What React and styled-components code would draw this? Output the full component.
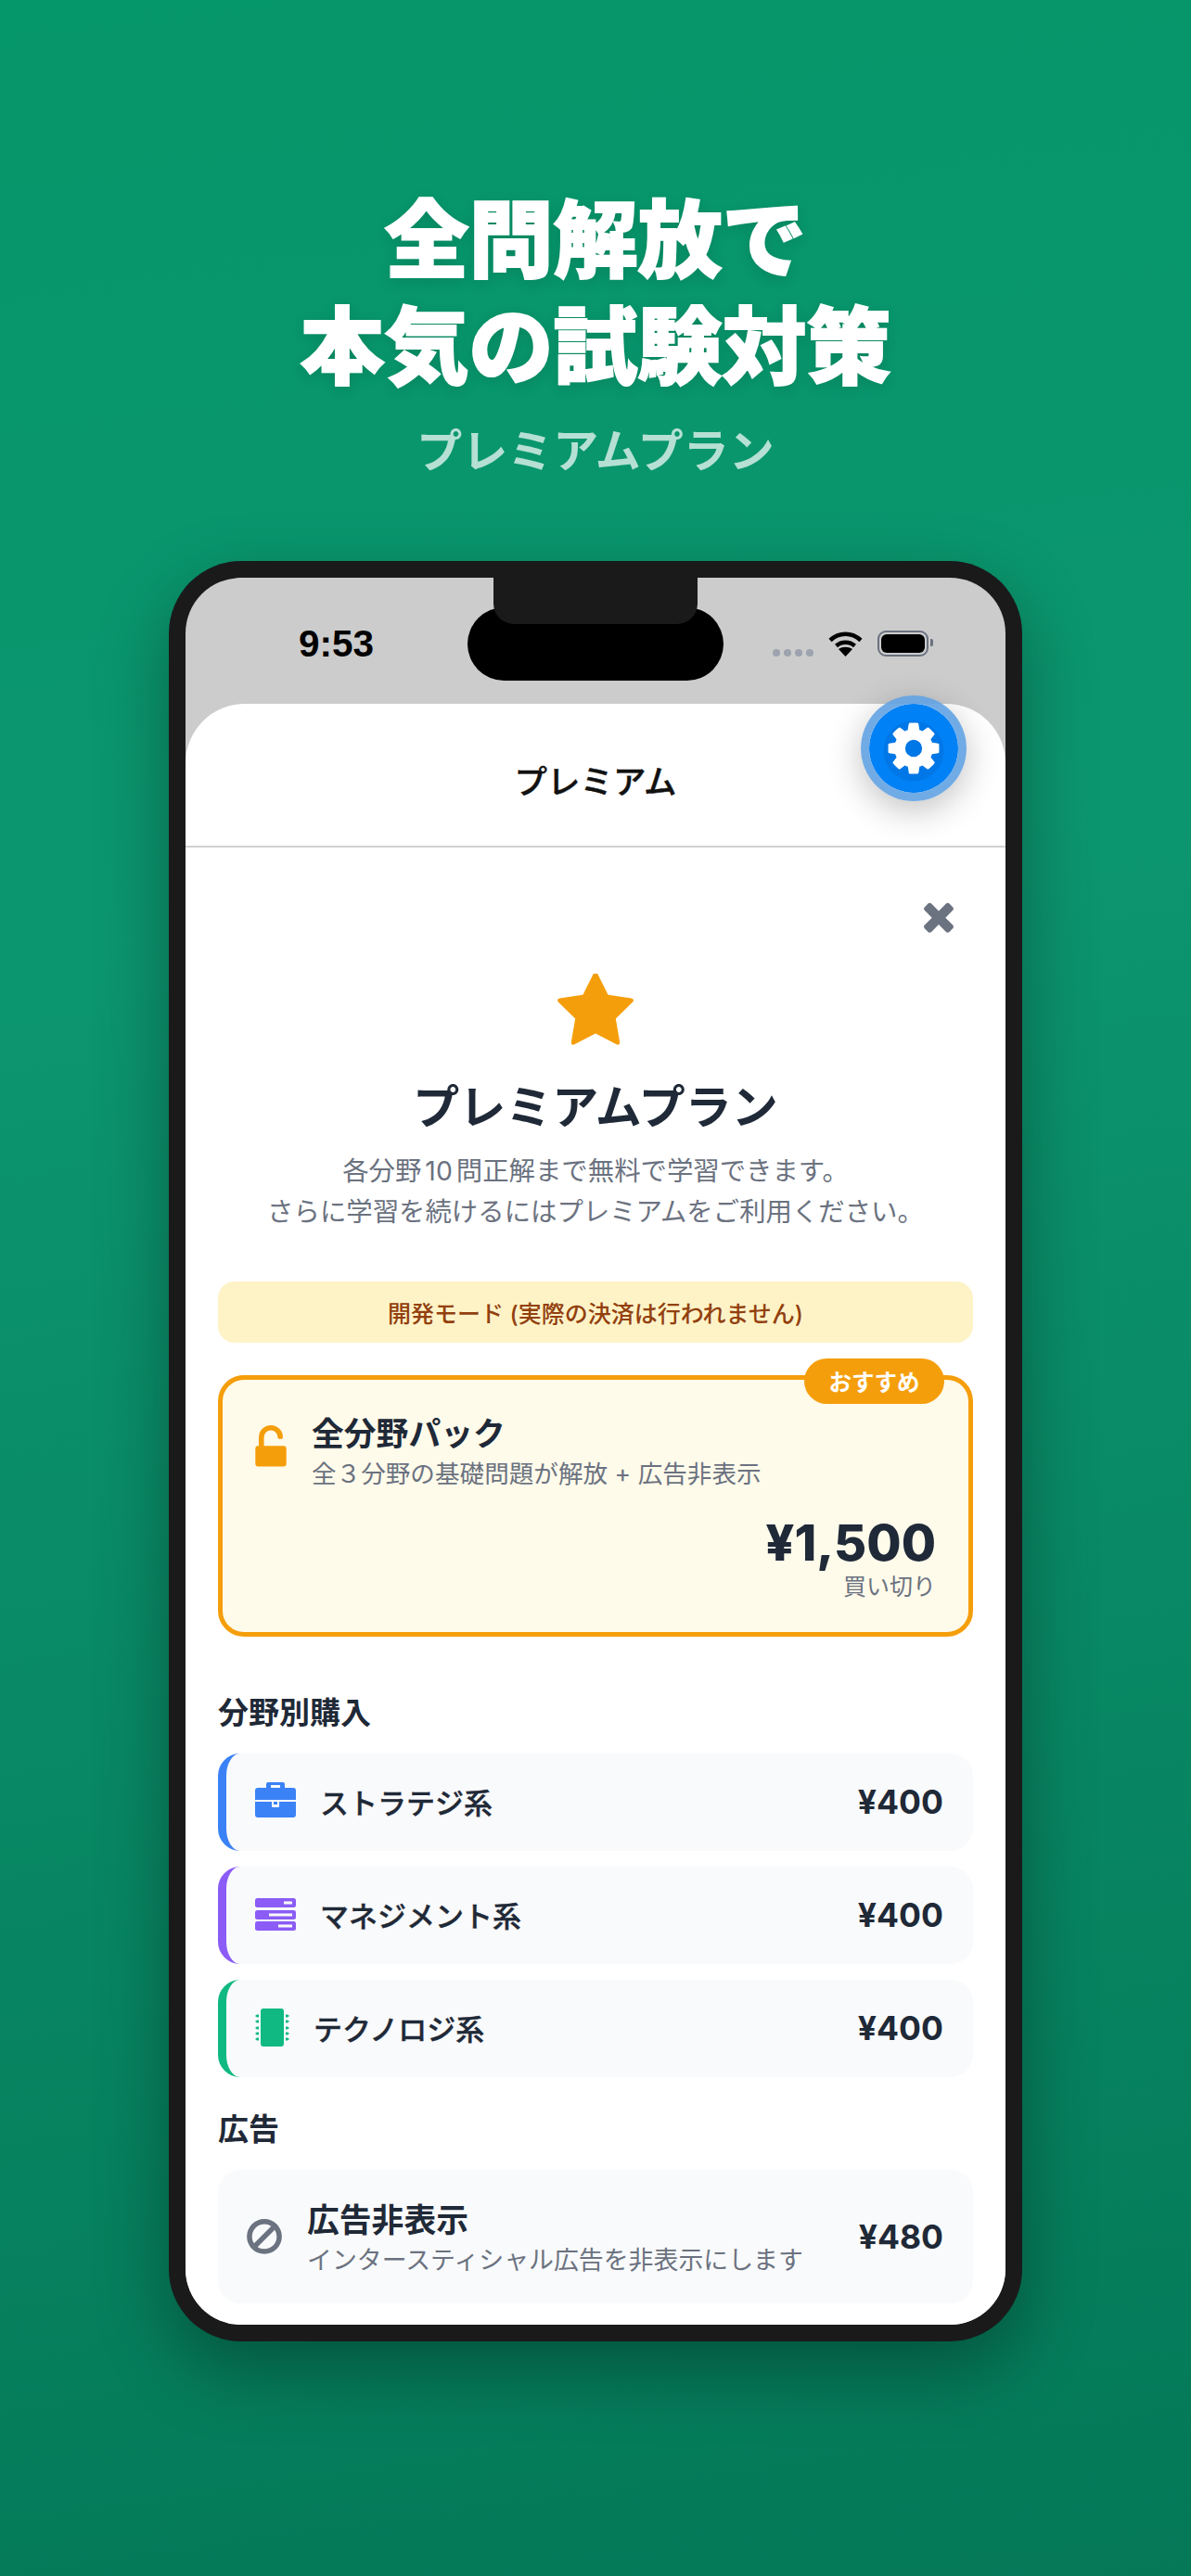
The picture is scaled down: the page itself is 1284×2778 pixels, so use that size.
import React from "react";
import styled, { createGlobalStyle } from "styled-components";

const Global = createGlobalStyle`
  html, body { margin: 0; padding: 0; }
  body { font-family: Inter, "Noto Sans CJK JP", "Noto Sans", sans-serif; }
  * { box-sizing: border-box; }
`;

const Page = styled.div`
  width: 1284px;
  height: 2778px;
  overflow: hidden;
  display: flex;
  flex-direction: column;
  align-items: center;
  background: linear-gradient(172deg, #059669 0%, #0c966f 35%, #047857 100%);
`;
const Hero = styled.header`
  padding-top: 202px;
  height: 605px;
  text-align: center;
  color: #fff;
`;
const Headline = styled.h1`
  margin: 0;
  font-size: 91px;
  line-height: 115px;
  font-weight: 900;
  -webkit-text-stroke: 1.8px #fff;
  text-shadow: 0 4px 16px rgba(0, 0, 0, 0.12);
`;
const HeroSub = styled.p`
  margin: 25px 0 0;
  font-size: 49px;
  line-height: 60px;
  font-weight: 700;
  color: rgba(255, 255, 255, 0.7);
`;
const Phone = styled.div`
  position: relative;
  width: 920px;
  height: 1920px;
  padding: 18px;
  border-radius: 78px;
  background: #1a1a1a;
  box-shadow: 0 30px 80px rgba(0, 0, 0, 0.33);
`;
const Notch = styled.div`
  position: absolute;
  z-index: 3;
  top: 18px;
  left: 350px;
  width: 220px;
  height: 50px;
  background: #1a1a1a;
  border-radius: 0 0 22px 22px;
`;
const Island = styled.div`
  position: absolute;
  z-index: 2;
  top: 50px;
  left: 322px;
  width: 276px;
  height: 79px;
  background: #000;
  border-radius: 40px;
`;
const Screen = styled.div`
  width: 884px;
  height: 1884px;
  border-radius: 60px;
  overflow: hidden;
  background: #cccccc;
  display: flex;
  flex-direction: column;
`;
const StatusBar = styled.div`
  height: 136px;
  flex: none;
  display: flex;
  align-items: flex-start;
  justify-content: space-between;
  padding: 48px 83px 0 122px;
`;
const Clock = styled.span`
  font-family: "Liberation Sans", Arial, sans-serif;
  font-size: 40.5px;
  line-height: 46px;
  font-weight: 700;
  color: #000;
`;
const StatusIcons = styled.div`
  display: flex;
  align-items: flex-start;
  padding-top: 9px;
`;
const Dots = styled.div`
  display: flex;
  gap: 4px;
  margin: 20px 16px 0 0;
`;
const Dot = styled.i`
  width: 8px;
  height: 8px;
  border-radius: 50%;
  background: #9ca3af;
`;
const Wifi = styled.svg`
  width: 37px;
  height: 28px;
  margin-right: 16px;
`;
const Battery = styled.div`
  position: relative;
  width: 55px;
  height: 28px;
  padding: 2px;
  border: 2px solid #6b7280;
  border-radius: 9px;
`;
const BatteryFill = styled.div`
  height: 100%;
  border-radius: 6px;
  background: #000;
`;
const BatteryNub = styled.div`
  position: absolute;
  right: -7px;
  top: 7px;
  width: 3px;
  height: 8px;
  background: #6b7280;
  border-radius: 0 2px 2px 0;
`;
const Sheet = styled.main`
  flex: 1;
  min-height: 0;
  background: #fff;
  border-radius: 64px 64px 0 0;
  overflow: hidden;
`;
const SheetHeader = styled.div`
  height: 155px;
  padding-top: 10px;
  display: flex;
  align-items: center;
  justify-content: center;
  border-bottom: 2px solid #d1d1d4;
  font-size: 35.5px;
  font-weight: 500;
  -webkit-text-stroke: 0.4px #111;
  color: #111;
`;
const SheetBody = styled.div`
  padding: 0 35px;
`;
const CloseRow = styled.div`
  height: 136px;
  display: flex;
  justify-content: flex-end;
  padding-top: 50px;
  padding-right: 13px;
`;
const CloseIcon = styled.svg`
  width: 48px;
  height: 48px;
  fill: #6b7280;
`;
const Intro = styled.div`
  display: flex;
  flex-direction: column;
  align-items: center;
  text-align: center;
`;
const StarIcon = styled.svg`
  width: 82px;
  height: 82px;
  fill: #f59e0b;
`;
const PlanTitle = styled.h2`
  margin: 27px 0 0;
  font-size: 50px;
  line-height: 70px;
  font-weight: 700;
  color: #1f2937;
`;
const PlanText = styled.p`
  margin: 12px 0 0;
  font-size: 28.4px;
  line-height: 44px;
  color: #6b7280;
`;
const Digits = styled.span`
  margin: 0 0.14em;
`;
const DevBanner = styled.div`
  margin-top: 53px;
  height: 66px;
  display: flex;
  align-items: center;
  justify-content: center;
  border-radius: 18px;
  background: #fef3c7;
  color: #92400e;
  font-size: 25px;
  font-weight: 500;
`;
const FeatureCard = styled.div`
  position: relative;
  margin-top: 35px;
  height: 282px;
  border: 5px solid #f59e0b;
  border-radius: 28px;
  background: #fffbeb;
  padding: 34px 35px 0 31px;
`;
const Badge = styled.span`
  position: absolute;
  top: -23px;
  right: 26px;
  width: 151px;
  height: 49px;
  display: flex;
  align-items: center;
  justify-content: center;
  border-radius: 25px;
  background: #f59e0b;
  color: #fff;
  font-size: 24.5px;
  font-weight: 700;
`;
const FeatureTop = styled.div`
  display: flex;
  align-items: center;
  gap: 18px;
`;
const Texts = styled.div`
  display: flex;
  flex-direction: column;
`;
const ItemTitle = styled.span`
  font-size: 34.8px;
  line-height: 48px;
  font-weight: 600;
  color: #1f2937;
`;
const ItemSub = styled.span`
  font-size: 26.6px;
  line-height: 38px;
  color: #6b7280;
`;
const AdSub = styled(ItemSub)`
  font-size: 26.9px;
`;
const PriceBlock = styled.div`
  margin-top: 26px;
  display: flex;
  flex-direction: column;
  align-items: flex-end;
`;
const BigPrice = styled.span`
  font-size: 54px;
  line-height: 60px;
  font-weight: 800;
  color: #1f2937;
`;
const Once = styled.span`
  font-size: 25px;
  line-height: 34px;
  color: #6b7280;
`;
const SectionLabel = styled.h3`
  margin: ${(p) => p.$top}px 0 0;
  font-size: 33px;
  line-height: 46px;
  font-weight: 600;
  color: #1f2937;
`;
const RowList = styled.div`
  margin-top: 21px;
  display: flex;
  flex-direction: column;
  gap: 17px;
`;
const Row = styled.div`
  height: 105px;
  display: flex;
  align-items: center;
  border-left: 9px solid ${(p) => p.$color};
  border-radius: 24px;
  background: #f9fafb;
  padding: 0 32px 0 31px;
`;
const RowIcon = styled.svg`
  flex: none;
  height: 44px;
  width: ${(p) => p.$w}px;
  margin-right: 26px;
`;
const RowLabel = styled.span`
  flex: 1;
  padding-bottom: 2px;
  font-size: 31px;
  font-weight: 500;
  -webkit-text-stroke: 0.4px #1f2937;
  color: #1f2937;
`;
const RowPrice = styled.span`
  font-size: 35.5px;
  font-weight: 700;
  color: #1f2937;
`;
const AdRow = styled.div`
  margin-top: 21px;
  height: 144px;
  display: flex;
  align-items: center;
  border-radius: 24px;
  background: #f9fafb;
  padding: 0 32px 0 28px;
  gap: 24px;
`;
const BanIcon = styled.svg`
  flex: none;
  width: 44px;
  height: 44px;
  fill: #6b7280;
`;
const AdTexts = styled(Texts)`
  flex: 1;
  padding-top: 2px;
`;
const LockIcon = styled.svg`
  flex: none;
  width: 52px;
  height: 52px;
  fill: #f59e0b;
  margin-left: -5px;
  margin-top: 15px;
  align-self: flex-start;
`;
const GearButton = styled.div`
  position: absolute;
  z-index: 4;
  top: 145px;
  left: 746px;
  width: 114px;
  height: 114px;
  border-radius: 50%;
  border: 9px solid rgba(98, 162, 226, 0.9);
  background: radial-gradient(circle at 50% 53%, #0077e6 0 32px, #0081f5 33px);
  background-clip: padding-box;
  display: flex;
  align-items: center;
  justify-content: center;
  box-shadow: 0 10px 36px rgba(0, 0, 0, 0.24);
`;
const GearIcon = styled.svg`
  width: 64px;
  height: 64px;
  fill: #fff;
`;

const COG = "M1152 896q0-106-75-181t-181-75-181 75-75 181 75 181 181 75 181-75 75-181zm512-109v222q0 12-8 23t-20 13l-185 28q-19 54-39 91 35 50 107 138 10 12 10 25t-9 23q-27 37-99 108t-94 71q-12 0-26-9l-138-108q-44 23-91 38-16 136-29 186-7 28-36 28h-222q-14 0-24.5-8.5t-11.5-21.5l-28-184q-49-16-90-37l-141 107q-10 9-25 9-14 0-25-11-126-114-165-168-7-10-7-23 0-12 8-23 15-21 51-66.5t54-70.5q-27-50-41-99l-183-27q-13-2-21-12.5t-8-23.5v-222q0-12 8-23t19-13l186-28q14-46 39-92-40-57-107-138-10-12-10-24 0-10 9-23 26-36 98.5-107.5t94.5-71.5q13 0 26 10l138 107q44-23 91-38 16-136 29-186 7-28 36-28h222q14 0 24.5 8.5t11.5 21.5l28 184q49 16 90 37l142-107q9-9 24-9 13 0 25 10 129 119 165 170 7 8 7 22 0 12-8 23-15 21-51 66.5t-54 70.5q26 50 41 98l183 28q13 2 21 12.5t8 23.5z";
const TIMES = "M1490 1322q0 40-28 68l-136 136q-28 28-68 28t-68-28l-294-294-294 294q-28 28-68 28t-68-28l-136-136q-28-28-28-68t28-68l294-294-294-294q-28-28-28-68t28-68l136-136q28-28 68-28t68 28l294 294 294-294q28-28 68-28t68 28l136 136q28 28 28 68t-28 68l-294 294 294 294q28 28 28 68z";
const STAR = "M1728 647q0 22-26 48l-363 354 86 500q1 7 1 20 0 21-10.5 35.5t-30.5 14.5q-19 0-40-12l-449-236-449 236q-22 12-40 12-21 0-31.5-14.5t-10.5-35.5q0-6 2-20l86-500-364-354q-25-27-25-48 0-37 56-46l502-73 225-455q19-41 49-41t49 41l225 455 502 73q56 9 56 46z";
const BAN = "M1440 893q0-161-87-295l-754 753q137 89 297 89 111 0 211.5-43.5t173.5-116.5 116-174.5 43-212.5zm-999 299l755-754q-135-91-300-91-148 0-273 73t-198 199-73 274q0 162 89 299zm1223-299q0 157-61 300t-163.5 246-245 164-298.5 61-298.5-61-245-164-163.5-246-61-300 61-299.5 163.5-245.5 245-164 298.5-61 298.5 61 245 164 163.5 245.5 61 299.5z";
const UNLOCK = "M1376 768q40 0 68 28t28 68v576q0 40-28 68t-68 28h-960q-40 0-68-28t-28-68v-576q0-40 28-68t68-28h32v-320q0-185 131.5-316.5t316.5-131.5 316.5 131.5 131.5 316.5q0 26-19 45t-45 19h-64q-26 0-45-19t-19-45q0-106-75-181t-181-75-181 75-75 181v320h736z";

const Briefcase = () => (
  <RowIcon $w={44} viewBox="0 0 44 44">
    <path fill="#3b82f6" fillRule="evenodd" d="M14 0h16a2 2 0 0 1 2 2v4h9a3 3 0 0 1 3 3v10H0V9a3 3 0 0 1 3-3h9V2a2 2 0 0 1 2-2zm3 3v3h10V3z" />
    <path fill="#3b82f6" d="M0 21h18v5a1 1 0 0 0 1 1h6a1 1 0 0 0 1-1v-5h18v14a3 3 0 0 1-3 3H3a3 3 0 0 1-3-3z" />
    <rect x="20" y="21" width="4" height="3" fill="#3b82f6" />
  </RowIcon>
);
const Server = () => (
  <RowIcon $w={44} viewBox="0 0 44 44">
    <g fill="#8b5cf6">
      <rect x="0" y="3" width="44" height="10" rx="2.5" />
      <rect x="0" y="16" width="44" height="10" rx="2.5" />
      <rect x="0" y="28" width="44" height="10" rx="2.5" />
    </g>
    <g fill="#f9fafb">
      <rect x="31" y="6.5" width="9" height="3" />
      <rect x="15" y="19.5" width="25" height="3" />
      <rect x="25" y="31.5" width="15" height="3" />
    </g>
  </RowIcon>
);
const Chip = () => (
  <RowIcon $w={37} viewBox="0 0 37 44">
    <g fill="#10b981">
      <rect x="6" y="0" width="25" height="41" rx="3" />
      {[7, 13, 20, 26, 32].map((y) => (
        <React.Fragment key={y}>
          <path d={`M0 ${y + 1}l2-1.5h2v3h-2z`} />
          <path d={`M33 ${y - 0.5}h2l2 1.5-2 1.5h-2z`} />
        </React.Fragment>
      ))}
    </g>
  </RowIcon>
);

const rows = [
  { label: "ストラテジ系", color: "#3b82f6", Icon: Briefcase },
  { label: "マネジメント系", color: "#8b5cf6", Icon: Server },
  { label: "テクノロジ系", color: "#10b981", Icon: Chip },
];

export default function App() {
  return (
    <Page>
      <Global />
      <Hero>
        <Headline>
          全問解放で
          <br />
          本気の試験対策
        </Headline>
        <HeroSub>プレミアムプラン</HeroSub>
      </Hero>
      <Phone>
        <Notch />
        <Island />
        <GearButton>
          <GearIcon viewBox="0 0 1792 1792">
            <path d={COG} />
          </GearIcon>
        </GearButton>
        <Screen>
          <StatusBar>
            <Clock>9:53</Clock>
            <StatusIcons>
              <Dots>
                <Dot />
                <Dot />
                <Dot />
                <Dot />
              </Dots>
              <Wifi viewBox="0 0 37 28">
                <path fill="none" stroke="#000" strokeWidth="4.5" d="M2 10.5C11.5 1.5 25.5 1.5 35 10.5" />
                <path fill="none" stroke="#000" strokeWidth="4.5" d="M8.5 16.5c5.8-5 14.2-5 20 0" />
                <path fill="#000" d="M18.5 28l-7.5-8c4.5-3 10.500-3 15 0z" />
              </Wifi>
              <Battery>
                <BatteryFill />
                <BatteryNub />
              </Battery>
            </StatusIcons>
          </StatusBar>
          <Sheet>
            <SheetHeader>プレミアム</SheetHeader>
            <SheetBody>
              <CloseRow>
                <CloseIcon viewBox="0 0 1792 1792">
                  <path d={TIMES} />
                </CloseIcon>
              </CloseRow>
              <Intro>
                <StarIcon viewBox="64 64 1664 1664">
                  <path d={STAR} />
                </StarIcon>
                <PlanTitle>プレミアムプラン</PlanTitle>
                <PlanText>
                  各分野<Digits>10</Digits>問正解まで無料で学習できます。
                  <br />
                  さらに学習を続けるにはプレミアムをご利用ください。
                </PlanText>
              </Intro>
              <DevBanner>開発モード (実際の決済は行われません)</DevBanner>
              <FeatureCard>
                <Badge>おすすめ</Badge>
                <FeatureTop>
                  <LockIcon viewBox="0 0 1792 1792">
                    <path d={UNLOCK} />
                  </LockIcon>
                  <Texts>
                    <ItemTitle>全分野パック</ItemTitle>
                    <ItemSub>全３分野の基礎問題が解放 + 広告非表示</ItemSub>
                  </Texts>
                </FeatureTop>
                <PriceBlock>
                  <BigPrice>¥1,500</BigPrice>
                  <Once>買い切り</Once>
                </PriceBlock>
              </FeatureCard>
              <SectionLabel $top={59}>分野別購入</SectionLabel>
              <RowList>
                {rows.map(({ label, color, Icon }) => (
                  <Row key={label} $color={color}>
                    <Icon />
                    <RowLabel>{label}</RowLabel>
                    <RowPrice>¥400</RowPrice>
                  </Row>
                ))}
              </RowList>
              <SectionLabel $top={33}>広告</SectionLabel>
              <AdRow>
                <BanIcon viewBox="0 0 1792 1792">
                  <path d={BAN} />
                </BanIcon>
                <AdTexts>
                  <ItemTitle>広告非表示</ItemTitle>
                  <AdSub>インタースティシャル広告を非表示にします</AdSub>
                </AdTexts>
                <RowPrice>¥480</RowPrice>
              </AdRow>
            </SheetBody>
          </Sheet>
        </Screen>
      </Phone>
    </Page>
  );
}
